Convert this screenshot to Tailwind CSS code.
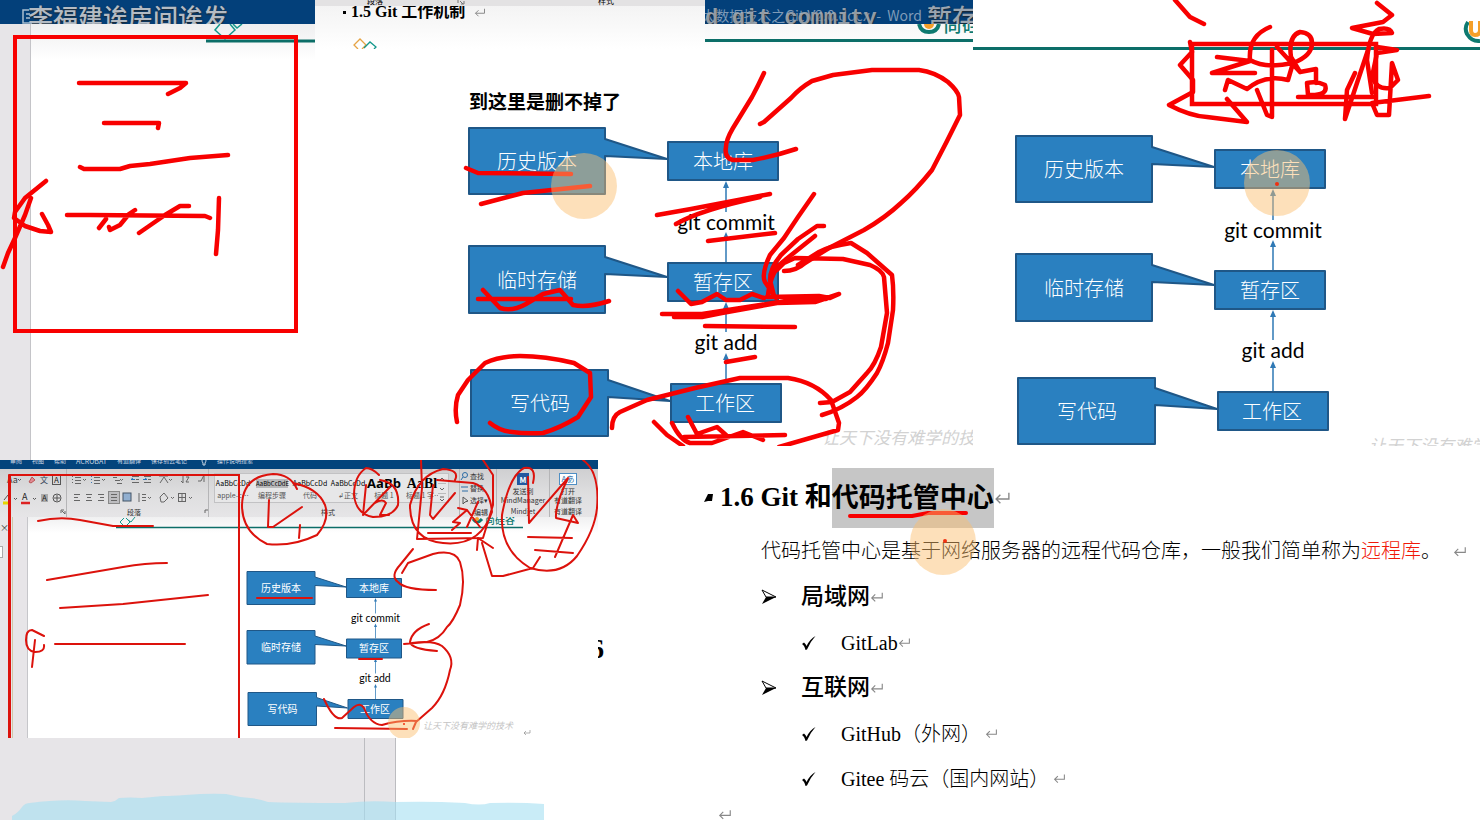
<!DOCTYPE html>
<html lang="zh-CN">
<head>
<meta charset="utf-8">
<meta name="viewport" content="width=device-width, initial-scale=1">
<title>Git 工作机制</title>
<script src="https://cdn.jsdelivr.net/npm/@tailwindcss/browser@4"></script>
</head>
<body class="bg-white text-black font-['Liberation_Serif','Noto_Sans_CJK_SC',serif]">
<svg width="0" height="0" class="absolute" aria-hidden="true">
  <defs>
    <symbol id="ret" viewBox="0 0 16 12"><path d="M14 1V7H2M6 3L2 7L6 11" fill="none" stroke="#888" stroke-width="1.3"/></symbol>
    <symbol id="arrowhead" viewBox="0 0 16 16"><path d="M1 1L15 8L5 8Z" fill="#fff" stroke="#000" stroke-width="1"/><path d="M5 8H15L1 15Z"/></symbol>
    <symbol id="tick" viewBox="0 0 16 16"><path d="M1 9L3 7.500Q5 9 5.500 11Q9 4 14.500 1Q9 7 6 14.500L4.500 15Q3.500 10.500 1 9Z"/></symbol>
    <symbol id="shapes" viewBox="0 0 320 320">
      <g fill="#2a80c0" stroke="#1f5787" stroke-width="2" stroke-linejoin="round">
        <path d="M4 3H140V14L202 34L140 31V69H4Z"/><path d="M4 121H140V132L202 152L140 149V188H4Z"/><path d="M6 245H143V255L205 276L143 272V311H6Z"/>
        <rect x="203" y="17" width="110" height="38"/><rect x="203" y="138" width="110" height="38"/><rect x="206" y="259" width="110" height="38"/>
      </g>
      <g stroke="#2f79b5" stroke-width="1.500"><path d="M261 60V87M261 110V137M261 181V207M261 231V258"/></g>
      <path d="M261 56L264 63H258ZM261 107L264 114H258ZM261 177L264 184H258ZM261 228L264 235H258Z" fill="#2f79b5"/>
    </symbol>
    <clipPath id="clipTop"><rect width="1480" height="446"/></clipPath>
    <clipPath id="clipLow"><rect y="460" width="598" height="278"/></clipPath>
  </defs>
</svg>

<main class="relative h-screen overflow-hidden bg-white">

  <!-- Clipping: word window, left edge -->
  <section class="absolute left-0 top-0 h-[460px] w-[315px] overflow-hidden bg-white">
    <div class="relative h-6 overflow-hidden bg-[#03407a]">
      <svg class="absolute left-[22px] top-[9px]" width="20" height="16" fill="none" stroke="#a9bdd0" stroke-width="1.500"><path d="M7 1H1V14H10M4 5H8M4 9H8"/></svg>
      <p class="pl-[28px] pt-1 text-[25px] leading-[25px] font-medium text-[#b4bbc3] whitespace-nowrap font-['Noto_Sans_CJK_SC',sans-serif] [text-shadow:0_1px_2px_#222]">李福建诶房间诶发</p>
    </div>
    <div class="flex h-full">
      <div class="w-[31px] border-r border-[#c4c4c8] bg-[#e7e5e8]"></div>
      <div class="h-9 flex-1 bg-linear-to-b from-[#efeff0] to-white"></div>
    </div>
    <svg class="absolute left-[200px] top-6" width="115" height="20" fill="none"><path d="M6 17H115" stroke="#0c6e68" stroke-width="3"/><path d="M20 0L15 6L25 15L35 6L30 0M33 0L37 4L42 0" stroke="#14988c" stroke-width="1.500"/></svg>
  </section>

  <!-- Clipping: section heading 1.5 -->
  <section class="absolute left-[315px] top-0 h-[49px] w-[390px] overflow-hidden bg-linear-to-b from-[#f2f2f2] to-white">
    <div class="relative h-[6px] overflow-hidden bg-[#e3e2e3] font-['Noto_Sans_CJK_SC',sans-serif] text-[8px] leading-[8px]">
      <span class="absolute left-[52px] -top-[3px]">段落</span><span class="absolute left-[283px] -top-[3px]">样式</span>
      <svg class="absolute left-[142px] top-0" width="8" height="5" fill="none" stroke="#777"><path d="M1 0V3M3 1L6 4M7 1V4H4"/></svg>
    </div>
    <h2 class="flex items-center gap-[5px] pl-[28px] text-[16px] leading-[12px] font-bold whitespace-nowrap"><span class="size-[3px] bg-black"></span>1.5 Git 工作机制<svg class="ml-1" width="12" height="9"><use href="#ret"/></svg></h2>
    <svg class="absolute left-[38px] top-[38px]" width="26" height="11" fill="none" stroke-width="1.300"><path d="M5 11L1 7L7 1L13 7L9 11" stroke="#e6a445"/><path d="M11 10L17 4L23 9L21 11" stroke="#14988c"/></svg>
  </section>

  <!-- Clipping: title bar of the document -->
  <section class="absolute left-[705px] top-0 h-[49px] w-[268px] overflow-hidden bg-linear-to-b from-[#eeeeef] to-white">
    <div class="relative h-6 overflow-hidden bg-[#03407a] whitespace-nowrap">
      <p class="absolute right-[51px] top-[6px] font-['Noto_Sans_CJK_SC',sans-serif] text-[14px] leading-[18px] text-[#7f9bb8]">谷大数据技术之Git V2.0.docx&nbsp; -&nbsp; Word</p>
      <p class="absolute left-0 top-[6px] font-['Liberation_Mono',monospace] text-[22px] leading-[26px] font-bold text-[#b4bbc3]/80 [text-shadow:0_1px_2px_#222]">d git commity</p>
      <p class="absolute left-[222px] top-1 font-['Noto_Sans_CJK_SC',sans-serif] text-[25px] leading-[25px] font-medium text-[#9ba5b0] [text-shadow:0_1px_2px_#222]">暂存</p>
    </div>
    <div class="relative h-[15px] overflow-hidden">
      <svg class="absolute left-[212px] top-0" width="24" height="12" fill="none"><path d="M2 0Q4 8 12 8Q20 8 22 0" stroke="#0e7a70" stroke-width="4"/><circle cx="12" cy="0" r="5" fill="#f5a02a"/></svg>
      <span class="absolute left-[238px] -top-[10px] font-['Noto_Sans_CJK_SC',sans-serif] text-[19px] leading-[19px] font-medium whitespace-nowrap text-[#0e7a70]">尚硅谷</span>
    </div>
    <div class="h-[3px] bg-[#0c6e68]"></div>
  </section>

  <!-- Clipping: page header, right -->
  <section class="absolute left-[973px] right-0 top-0 h-[54px] overflow-hidden bg-white">
    <div class="mt-[47px] h-[3px] bg-[#0c6e68]"></div>
    <svg class="absolute left-[490px] top-[19px]" width="28" height="26" fill="none"><path d="M5 3Q1 9 4 15Q9 23 17 22" stroke="#0e7a70" stroke-width="4"/><path d="M8 2V11Q8 16 12 16Q17 16 17 11V2" stroke="#f5a02a" stroke-width="4"/></svg>
  </section>

  <h3 class="absolute left-[469px] top-[89px] font-['Noto_Sans_CJK_SC',sans-serif] text-[19px] leading-6 font-bold whitespace-nowrap">到这里是删不掉了</h3>

  <svg class="absolute left-[465px] top-[125px] w-80" viewBox="0 0 320 320" role="img" aria-label="Git 工作区、暂存区、本地库">
    <use href="#shapes"/>
    <g class="font-['Noto_Sans_CJK_SC',sans-serif] text-[20px] font-light" fill="#fff" text-anchor="middle">
      <text x="72" y="44">历史版本</text><text x="258" y="44">本地库</text>
      <text x="72" y="163">临时存储</text><text x="258" y="165">暂存区</text>
      <text x="75" y="286">写代码</text><text x="260" y="286">工作区</text>
    </g>
    <g class="font-[Lato,sans-serif] text-[21px]" text-anchor="middle"><text x="261" y="105">git commit</text><text x="261" y="225">git add</text></g>
  </svg>

  <svg class="absolute left-[1012px] top-[133px] w-80" viewBox="0 0 320 320" role="img" aria-label="Git 工作区、暂存区、本地库">
    <use href="#shapes"/>
    <g class="font-['Noto_Sans_CJK_SC',sans-serif] text-[20px] font-light" fill="#fff" text-anchor="middle">
      <text x="72" y="44">历史版本</text><text x="258" y="44">本地库</text>
      <text x="72" y="163">临时存储</text><text x="258" y="165">暂存区</text>
      <text x="75" y="286">写代码</text><text x="260" y="286">工作区</text>
    </g>
    <g class="font-[Lato,sans-serif] text-[21px]" text-anchor="middle"><text x="261" y="105">git commit</text><text x="261" y="225">git add</text></g>
  </svg>

  <p class="absolute left-[822px] top-[427px] h-[19px] w-[151px] overflow-hidden font-['Noto_Sans_CJK_SC',sans-serif] text-[17px] leading-5 italic whitespace-nowrap text-[#d2d2d2]">让天下没有难学的技术</p>
  <p class="absolute left-[1369px] right-0 top-[435px] h-[11px] overflow-hidden font-['Noto_Sans_CJK_SC',sans-serif] text-[17px] leading-5 italic whitespace-nowrap text-[#d2d2d2]">让天下没有难学的技术</p>

  <!-- Clipping: whole Word window -->
  <section class="absolute left-0 top-[460px] h-[278px] w-[598px] overflow-hidden bg-white font-['Noto_Sans_CJK_SC',sans-serif] text-[#333]">
    <div class="flex h-[9px] items-start gap-[10px] overflow-hidden bg-[#03447c] pl-[10px] text-[6px] leading-[2px] whitespace-nowrap text-[#c9d6e3]">
      <span>审阅</span><span>视图</span><span>帮助</span><span class="text-[7px]">ACROBAT</span><span>有道翻译</span><span>保存到云笔记</span>
      <svg class="ml-1" width="6" height="7" fill="none" stroke="#c9d6e3"><path d="M1 0Q1 2 2 3V5H4V3Q5 2 5 0"/></svg><span>操作说明搜索</span>
    </div>
    <div class="flex h-12 bg-linear-to-b from-[#cfcfd1] via-[#dededf] to-[#e6e5e7] text-[7px] leading-[9px] whitespace-nowrap">
      <svg class="w-[67px] shrink-0 border-r border-[#b5b5b7]" height="48" fill="none" stroke="#555">
        <text x="7" y="14" class="text-[9px]" fill="#444" stroke="none">Aa</text><path d="M18 10l1.500 1.500L21 10"/>
        <path d="M29 13L32 8L35 11L31 14Z" fill="#e08a94" stroke="#b55"/><text x="40" y="14" class="text-[8px]" fill="#345" stroke="none">文</text>
        <rect x="52.500" y="6.500" width="8" height="9"/><text x="54" y="14" class="text-[8px]" fill="#222" stroke="none">A</text>
        <path d="M3 34H9" stroke="#e6d500" stroke-width="3"/><path d="M4 31L8 26M14 29l1.500 1.500L17 29M33 29l1.500 1.500L36 29"/>
        <text x="22" y="31" class="text-[9px]" fill="#222" stroke="none">A</text><path d="M21 34H30" stroke="#d22" stroke-width="2.500"/>
        <rect x="41" y="25" width="7" height="8" fill="#aaa" stroke="none"/><text x="42" y="32" class="text-[8px]" fill="#222" stroke="none">A</text><circle cx="57" cy="29" r="4"/><path d="M54 29H60M57 26V32"/>
        <path d="M61 44V41H64M62 42L65 45V42" stroke="#666"/>
      </svg>
      <div class="relative w-[142px] shrink-0 border-r border-[#b5b5b7]">
        <svg class="absolute inset-0" width="142" height="48" fill="none" stroke="#666">
          <path d="M5.500 7V15" stroke-dasharray="1 2"/><path d="M8 8.500H14M8 11.500H14M8 14.500H14M27 8.500H33M27 11.500H33M27 14.500H33M46 8.500H50M48 11.500H53M50 14.500H55"/>
          <path d="M24.500 7V15" stroke="#3a79b8" stroke-dasharray="1 2"/><path d="M16 10l1.500 1.500L19 10M35 10l1.500 1.500L38 10M53 10l1.500 1.500L56 10M102 10l1.500 1.500L105 10"/>
          <path d="M65 7.500H72M69 10.500H72M65 13.500H72M77 7.500H84M81 10.500H84M77 13.500H84"/><path d="M68 10.500H64L66 9M76 10.500H80L78 9" stroke="#2672b8"/>
          <path d="M92 7H101M93 14L97 8L101 14M116 7V14L114 12M119 8H122L119 13H122M131 12H134L137 6M137 6V13"/>
          <path d="M7 25.500H13M7 28.500H11M7 31.500H13M19 25.500H25M20 28.500H24M19 31.500H25M31 25.500H37M33 28.500H37M31 31.500H37"/>
          <rect x="41.500" y="22.500" width="11" height="12" fill="#bdbdc0" stroke="#888"/><path d="M44 25.500H50M44 28.500H50M44 31.500H50"/><rect x="56" y="24" width="8" height="8" fill="#91afd0" stroke="#456"/>
          <path d="M72 24V33M75 25.500H79M75 28.500H79M75 31.500H79M81 28l1.500 1.500L84 28M93 28L97 24L101 29L97 33H94ZM104 28l1.500 1.500L107 28"/><rect x="111.500" y="24.500" width="7" height="8"/><path d="M115 25V32M112 28.500H118M122 28l1.500 1.500L125 28M138 44V41H141"/>
        </svg>
        <span class="absolute left-[60px] top-[39px]">段落</span>
      </div>
      <div class="relative w-[251px] shrink-0 border-r border-[#b5b5b7] pl-[5px] pt-1">
        <div class="flex h-[30px] w-[235px] border border-[#c2c2c4] bg-[#e7e7e8] text-center">
          <div class="w-9 overflow-hidden pt-[5px] text-[#555]"><p class="text-black">AaBbCcDd</p><p class="pt-[3px]">apple-c…</p></div>
          <div class="ml-[5px] w-8 pt-[5px] text-[#555]"><p class="bg-[#b8b8ba] text-[6px] text-black">AaBbCcDdE</p><p class="pt-[3px]">编程步骤</p></div>
          <div class="ml-1 w-9 pt-[5px] text-[#555]"><p class="text-black">AaBbCcDd</p><p class="pt-[3px]">代码</p></div>
          <div class="ml-[2px] w-9 pt-[5px] text-[#555]"><p class="text-black">AaBbCcDd</p><p class="pt-[3px]">↲正文</p></div>
          <div class="w-9 pt-[5px] text-[#555]"><p class="font-['Open_Sans',sans-serif] text-[13px] font-bold text-black">AaBb</p><p class="pt-[3px]">标题 1</p></div>
          <div class="ml-1 w-8 overflow-hidden pt-[5px] text-[#555]"><p class="font-['Liberation_Serif',serif] text-[14px] font-bold text-black">AaBl</p><p class="pt-[3px]">标题 1 字…</p></div>
          <svg width="8" height="30" fill="none" stroke="#666"><path d="M0 9.500H8M0 19.500H8" stroke="#bbb"/><path d="M2 6L4 4L6 6M2 14L4 16L6 14M2 23H6M2 25L4 27L6 25"/></svg>
        </div>
        <span class="absolute left-[112px] top-[39px]">样式</span>
      </div>
      <div class="relative flex w-[37px] shrink-0 flex-col gap-[3px] border-r border-[#b5b5b7] pt-[3px] pl-[10px]">
        <span>查找</span><span>替换</span><span>选择▾</span><span class="pl-1">编辑</span>
        <svg class="absolute left-0 top-0" width="10" height="36" fill="none" stroke="#2c6ca5"><circle cx="5" cy="6" r="2.500"/><path d="M3 8L1 11M1 18H8M2 22H8"/><path d="M3 28L8 32L5 33L3 35Z" stroke="#555"/></svg>
      </div>
      <div class="flex w-[53px] shrink-0 flex-col items-center border-r border-[#b5b5b7] pt-1"><span class="grid size-3 place-items-center bg-[#2359a0] text-[8px] font-bold text-white">M</span><span class="pt-[2px]">发送到</span><span>MindManager</span><span class="pt-[2px]">Mindjet</span></div>
      <div class="flex w-[36px] shrink-0 flex-col items-center pt-1"><span class="h-3 border border-[#4f8fc4] bg-white px-[2px] text-[8px] text-[#2b6da8]">Aあ</span><span class="pt-[2px]">打开</span><span>有道翻译</span><span class="pt-[2px]">有道翻译</span></div>
    </div>
    <div class="flex h-[221px]">
      <div class="relative w-7 border-r border-[#c6c6ca] bg-[#e7e5e8] text-[9px] leading-[10px]"><span class="absolute left-0 top-[6px]">×</span><span class="absolute -left-px top-[29px] h-3 w-1 border border-[#aaa] bg-white"></span><span class="absolute left-3 top-0 h-full w-px bg-[#cfc8a8]"></span></div>
      <div class="h-4 flex-1 bg-linear-to-b from-[#f0f0f1] to-white"></div>
    </div>
    <svg class="absolute left-[115px] top-[57px]" width="410" height="12" fill="none"><path d="M1 10.500H408" stroke="#0c6e68" stroke-width="1.500"/><path d="M9 1L5 5L10 10L15 5L11 1M13 3L16 5L20 0" stroke="#14988c"/><path d="M358 2Q362 8 367 2" stroke="#0e7a70" stroke-width="3"/><circle cx="362" cy="2" r="2" fill="#f5a02a"/></svg>
    <span class="absolute left-[485px] top-[57px] flex h-2 items-end overflow-hidden text-[10px] leading-[11px] font-medium text-[#0e7a70]">尚硅谷</span>
    <p class="absolute left-[423px] top-[260px] text-[9px] leading-3 italic whitespace-nowrap text-[#c4c4c4]">让天下没有难学的技术</p>
    <svg class="absolute left-[523px] top-[269px]" width="8" height="7"><use href="#ret"/></svg>
  </section>

  <svg class="absolute left-[245px] top-[570px] w-40" viewBox="0 0 320 320" role="img" aria-label="Git 工作区、暂存区、本地库">
    <use href="#shapes"/>
    <g class="font-['Noto_Sans_CJK_SC',sans-serif] text-[20px]" fill="#fff" text-anchor="middle">
      <text x="72" y="43">历史版本</text><text x="258" y="43">本地库</text>
      <text x="72" y="162">临时存储</text><text x="258" y="164">暂存区</text>
      <text x="75" y="285">写代码</text><text x="260" y="285">工作区</text>
    </g>
    <g class="font-[Lato,sans-serif] text-[21px]" text-anchor="middle"><text x="261" y="104">git commit</text><text x="260" y="224">git add</text></g>
  </svg>

  <div class="absolute left-[598px] top-[637px] flex h-[25px] w-[6px] justify-end overflow-hidden text-[27px] leading-[25px] font-bold">6</div>

  <!-- Strip below the window -->
  <svg class="absolute left-0 top-[738px]" width="610" height="82">
    <rect width="395" height="82" fill="#e7e5e8"/><path d="M364.500 0V82M395.500 0V82" stroke="#bcbcc0" stroke-width="1"/>
    <path d="M12 82V78Q18 75 22 69Q25 65 30 65Q60 61 85 63L111 64Q116 63 119 60Q130 59 142 60L163 58Q172 58 185 57Q210 55 226 56Q238 59 250 60Q260 61 268 64Q290 65 345 65Q370 62 395 64Q430 63 465 65Q480 68 490 65Q520 64 544 66V82Z" fill="#a5dff2" fill-opacity=".6"/>
  </svg>

  <!-- Section 1.6 -->
  <article class="absolute left-[700px] right-0 top-[467px] whitespace-nowrap text-[20px] font-light">
    <h2 class="flex h-[61px] items-center pl-1 text-[27px] font-bold">
      <svg width="10" height="10"><path d="M4 1H9L8 8H4L0 9Z"/></svg><span class="ml-[6px]">1.6 Git 和</span><span class="bg-[#c6c6c6] leading-[60px]">代码托管中心</span><svg width="17" height="14"><use href="#ret"/></svg>
    </h2>
    <p class="flex h-[46px] items-center pl-[61px]">代码托管中心是基于网络服务器的远程代码仓库，一般我们简单称为<span class="text-[#f01808]">远程库</span>。<svg class="ml-3" width="14" height="11"><use href="#ret"/></svg></p>
    <ul>
      <li>
        <div class="flex h-[46px] items-center pl-[61px] text-[23px] font-medium"><svg class="mr-6" width="16" height="16"><use href="#arrowhead"/></svg>局域网<svg width="14" height="12"><use href="#ret"/></svg></div>
        <ul><li class="flex h-[45px] items-center pl-[101px]"><svg class="mr-6" width="16" height="16"><use href="#tick"/></svg>GitLab<svg width="13" height="11"><use href="#ret"/></svg></li></ul>
      </li>
      <li>
        <div class="flex h-[46px] items-center pl-[61px] text-[23px] font-medium"><svg class="mr-6" width="16" height="16"><use href="#arrowhead"/></svg>互联网<svg width="14" height="12"><use href="#ret"/></svg></div>
        <ul>
          <li class="flex h-[45px] items-center pl-[101px]"><svg class="mr-6" width="16" height="16"><use href="#tick"/></svg>GitHub（外网）<svg class="ml-1" width="13" height="11"><use href="#ret"/></svg></li>
          <li class="flex h-[45px] items-center pl-[101px]"><svg class="mr-6" width="16" height="16"><use href="#tick"/></svg>Gitee 码云（国内网站）<svg class="ml-1" width="13" height="11"><use href="#ret"/></svg></li>
        </ul>
      </li>
    </ul>
    <div class="flex h-[19px] items-end pl-[18px]"><svg width="14" height="11"><use href="#ret"/></svg></div>
  </article>

  <!-- Pen strokes and pointer halos -->
  <svg class="pointer-events-none absolute left-0 top-0" width="1480" height="820" fill="none" stroke="#f80000" stroke-linecap="round" stroke-linejoin="round" aria-hidden="true">
    <g stroke-width="4.500" clip-path="url(#clipTop)">
      <path stroke-width="4" stroke-linejoin="miter" d="M15 37H296V331H15Z"/>
      <path d="M79 83H186L180 88L168 94M104 123H159L158 128M80 167L84 169H120L130 166L150 164L190 158L228 155M67 215H90L205 216L210 218M106 219L99 228M135 210L129 214L120 225L110 230L109 227M189 206H180L165 215L139 233M219 198L218 230L216 254M46 181L25 198L15 212L14 218L25 226L40 231L51 232L48 225L42 214M31 198L25 215L15 238L8 253L3 267"/>
      <path d="M764 73Q758 86 752 97L733 128Q726 140 726 147Q724 158 733 160H753Q775 156 796 149"/>
      <path d="M760 124L764 122L791 98Q800 88 812 81L833 75L872 70H919Q935 72 948 82Q958 91 959 97L960 115L946 143L932 170Q916 190 901 203Q885 218 864 230L829 248L805 263Q796 271 784 271"/>
      <path d="M798 265L819 252Q830 246 851 243L867 253L892 275Q894 290 893 310L888 343Q883 362 877 373Q866 390 857 397Q842 409 822 415M777 270L784 263L795 258L843 259L870 265Q882 270 884 277L887 313L881 347Q875 365 867 373L850 392L832 402L820 403"/>
      <path d="M814 194L798 217L784 238L770 255Q761 274 765 282L776 298M824 226H817L798 239L781 255Q770 268 770 280L774 296M815 236L785 260Q771 270 768 295"/>
      <path d="M767 297L819 296L830 298L839 294L815 302L777 303L722 313L702 317H674M662 314H702L760 305L798 299L826 299M678 291L691 304L702 302L717 294L726 300H740L752 294L764 298M705 326L795 327"/>
      <path d="M657 215L691 209L770 194M676 224Q700 210 760 197M708 241L775 233M466 168L478 173L571 174M481 204L523 193L590 186M726 362L755 357"/>
      <path d="M478 299H571M483 290L500 308Q512 312 526 304L543 294L560 290L573 305Q588 308 609 301M457 422Q454 408 458 395L468 380L485 363Q500 356 520 356Q545 356 574 363L590 373L591 397L578 417Q560 428 543 433Q525 434 512 432Q500 431 490 423"/>
      <path d="M612 428Q612 416 620 412L647 400L695 388L740 378H788Q815 382 831 400L839 423L838 430L779 447M654 422L667 435L683 446M672 423Q680 440 690 443L712 443L743 432L763 440M688 417L697 434L717 427L726 435M684 437L785 435"/>
      <path stroke-linejoin="miter" d="M1192 44H1376V104H1192Z"/>
      <path d="M1175 0L1190 17L1204 24M1377 3L1392 15L1383 22L1352 28L1373 34L1392 33Q1390 27 1379 29Q1369 34 1367 60L1372 93M1190 42L1192 52L1180 65L1193 80V92L1169 105Q1190 116 1207 117L1247 122L1227 99"/>
      <path d="M1217 57L1250 61L1212 73H1255M1225 90L1228 80L1247 89Q1265 74 1288 80L1293 63M1270 27Q1248 36 1250 60Q1265 69 1293 63Q1312 56 1312 43Q1312 33 1300 32Q1288 36 1291 57L1300 72L1316 69V83M1272 50V117L1267 115L1257 90M1277 47L1300 72M1307 83L1308 95Q1329 96 1325 85Q1317 81 1307 83M1298 97H1373M1355 73L1347 90L1345 119L1368 50M1377 47L1397 50L1377 53L1372 77Q1377 90 1390 88L1398 80L1392 63L1389 115H1377L1372 103L1429 96"/>
    </g>
    <g stroke="#dc120c" stroke-width="2" clip-path="url(#clipLow)">
      <path d="M9 475H239V750M9 475V750" stroke-linejoin="miter"/><path d="M10 475V750"/>
      <path d="M38 521Q60 516 80 520L113 526H153M47 580L123 567Q145 563 167 563M60 608L123 604L208 595M55 644H185M44 636L32 630Q26 630 26 640Q26 651 35 652Q45 652 44 645M35 640L32 667M257 598H312M359 659H382"/>
      <path d="M297 489Q290 474 273 474Q243 476 242 505Q242 532 267 544Q292 547 317 535Q330 520 325 505Q318 488 293 483M269 500L268 527H273L302 507M300 525L299 538"/>
      <path d="M379 475Q372 468 366 468Q354 476 354 495Q356 514 373 517Q393 517 398 505Q400 483 380 480M366 485L363 515L390 487M375 503Q383 498 386 503L380 515H389"/>
      <path d="M455 480Q460 470 443 469Q418 475 410 505Q410 540 443 543Q480 547 492 512Q490 488 473 483L437 480M421 460L422 488L417 539L483 538L493 505V475L483 460M433 485L430 515L433 519L455 493M458 508L467 510L453 522L460 523L452 530M467 510L480 527M478 502L467 527M428 533H471"/>
      <path d="M477 550L478 538L493 548M482 543L492 576H503L533 568L540 557M533 483Q537 466 524 468Q509 476 502 515Q500 550 530 568Q560 577 577 556Q595 530 597 508Q600 472 583 460M528 477L529 523L568 478Q555 505 556 518L578 523L573 515L555 557M528 537L572 538M535 550L573 553"/>
      <path d="M413 549L400 565Q390 576 398 582Q405 590 436 590M402 573L408 563L433 554Q455 549 460 562Q466 580 460 605Q453 622 447 627Q440 639 427 642L404 644M429 624Q412 630 410 642Q411 649 437 651M412 643Q433 640 442 646Q455 657 450 670Q445 695 432 708L416 722L413 729M324 699Q334 721 342 718L354 707Q360 702 364 708Q370 724 382 725Q400 720 417 721M335 728L407 729"/>
    </g>
    <path d="M850 516H912L928 513L966 513" stroke-width="4"/>
    <g fill="#fbbf6e" fill-opacity=".48" stroke="none"><circle cx="584" cy="186" r="33"/><circle cx="1277" cy="183" r="33"/><circle cx="943" cy="542" r="33"/><circle cx="404" cy="723" r="16" clip-path="url(#clipLow)"/></g>
    <g fill="#f03010" stroke="none"><circle cx="1277" cy="184" r="2"/><circle cx="945" cy="541" r="2"/><circle cx="404" cy="724" r="1"/></g>
  </svg>
</main>
</body>
</html>
